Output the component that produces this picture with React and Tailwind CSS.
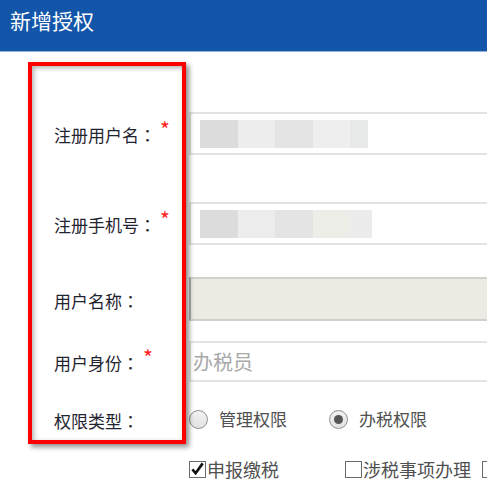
import React from 'react'

const FONT = { fontFamily: '"Noto Sans CJK SC", "Noto Sans", sans-serif' }
const COLON = { fontFamily: '"Noto Sans CJK TC", "Noto Sans CJK SC", sans-serif' }

const BLUR_1 = ['#dcdcdc', '#ededed', '#e4e4e4', '#eeeeee', '#e7e8e8']
const BLUR_2 = ['#dcdcdc', '#ededed', '#e4e4e4', '#eeeee8', '#ececec']

function Label({ text, required }) {
  return (
    <div className="w-[189px] shrink-0 pl-[54px] pt-[3px] text-[17px] text-[#1f2430] flex items-start whitespace-nowrap">
      <span>{text}</span>
      <span style={COLON}>：</span>
      {required && <span className="text-[#ff2020] text-[21px] leading-none ml-[4px] -mt-[3px]">*</span>}
    </div>
  )
}

function Blurred({ colors, last }) {
  return (
    <div className="flex h-[28px] ml-[9px]">
      {colors.map((c, i) => (
        <div
          key={i}
          className={i === colors.length - 1 ? '' : 'w-[37.5px]'}
          style={{ background: c, width: i === colors.length - 1 ? last : undefined }}
        />
      ))}
    </div>
  )
}

function Radio({ checked, label }) {
  return (
    <div className="flex items-center whitespace-nowrap shrink-0">
      <span className="w-[19px] h-[19px] rounded-full border border-[#8f8f8f] bg-gradient-to-b from-[#f2f2f2] to-[#e2e2e2] flex items-center justify-center">
        {checked && <span className="w-[9px] h-[9px] rounded-full bg-[#555]" />}
      </span>
      <span className="ml-[11px] text-[17px] text-[#505050]">{label}</span>
    </div>
  )
}

function Check({ checked, label }) {
  return (
    <div className="flex items-center whitespace-nowrap shrink-0">
      <span className="w-[17px] h-[17px] shrink-0 border border-[#6a6a6a] bg-white flex items-center justify-center">
        {checked && (
          <svg viewBox="0 0 16 16" className="w-[16px] h-[16px]">
            <path d="M2.5 8.5 L6 12.5 L13.5 2" fill="none" stroke="#111" strokeWidth="2.8" />
          </svg>
        )}
      </span>
      {label && <span className="ml-[1px] text-[18px] text-[#505050]">{label}</span>}
    </div>
  )
}

export default function App() {
  return (
    <div className="w-[487px] h-[483px] overflow-hidden bg-white relative" style={FONT}>
      <div className="h-[52px] bg-[#1356a9] border-b border-[#94b2d9] pl-[10px] pt-[5px]">
        <span className="text-white text-[21px]">新增授权</span>
      </div>

      <div className="flex flex-col">
        <div className="flex items-center mt-[60px]">
          <Label text="注册用户名" required />
          <div className="w-[320px] h-[43px] shrink-0 border-2 border-[#e2e2e2] border-r-0 flex items-center">
            <Blurred colors={BLUR_1} last="18px" />
          </div>
        </div>

        <div className="flex items-center mt-[47px]">
          <Label text="注册手机号" required />
          <div className="w-[320px] h-[43px] shrink-0 border-2 border-[#e2e2e2] border-r-0 flex items-center">
            <Blurred colors={BLUR_2} last="22px" />
          </div>
        </div>

        <div className="flex items-center mt-[32px]">
          <Label text="用户名称" />
          <div className="w-[320px] h-[44px] shrink-0 border-2 border-[#cfcfcb] border-l-[#b0b0ad] border-r-0 bg-[#ebebe4]" />
        </div>

        <div className="flex items-center mt-[20px]">
          <Label text="用户身份" required />
          <div className="w-[320px] h-[41px] shrink-0 border-2 border-[#e4e4e4] border-r-0 flex items-center pl-[2px]">
            <span className="text-[20px] text-[#a8a8a8]">办税员</span>
          </div>
        </div>

        <div className="flex items-center mt-[22px] h-[30px]">
          <Label text="权限类型" />
          <div className="flex items-center gap-[42px]">
            <Radio label="管理权限" />
            <Radio checked label="办税权限" />
          </div>
        </div>

        <div className="flex items-center mt-[20px] h-[30px]">
          <div className="w-[189px] shrink-0" />
          <div className="flex items-center">
            <Check checked label="申报缴税" />
            <div className="ml-[66px] shrink-0">
              <Check label="涉税事项办理" />
            </div>
            <div className="ml-[11px] shrink-0">
              <Check />
            </div>
          </div>
        </div>
      </div>

      <div className="absolute left-[28px] top-[62px] w-[158px] h-[382px] border-4 border-[#ff0000] shadow-[3px_3px_5px_rgba(0,0,0,0.45),inset_2px_2px_5px_rgba(0,0,0,0.3)]" />
    </div>
  )
}
